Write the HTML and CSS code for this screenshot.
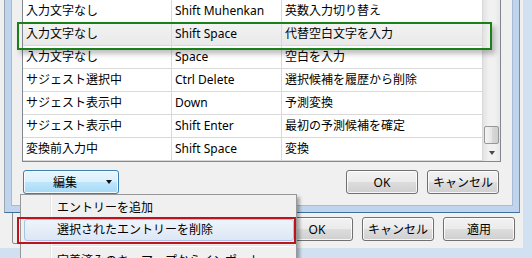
FILE: index.html
```html
<!DOCTYPE html>
<html lang="ja">
<head>
    <meta charset="UTF-8">
    <meta name="viewport" content="width=device-width, initial-scale=1.0">
    <title>キー設定の編集</title>
    <link rel="stylesheet" href="styles.css">
</head>
<body>
    <div class="outer">
        <div class="outer-bottom">
            <div class="outer-panel"></div>
            <div class="outer-buttons">
                <button class="btn">OK</button>
                <button class="btn">キャンセル</button>
                <button class="btn">適用</button>
            </div>
        </div>
    </div>

    <div class="editor">
        <div class="editor-client">
            <div class="keytable">
                <div class="rows">
                    <div class="row"><span>入力文字なし</span><span>Shift Muhenkan</span><span>英数入力切り替え</span></div>
                    <div class="row selected"><span>入力文字なし</span><span>Shift Space</span><span>代替空白文字を入力</span></div>
                    <div class="row"><span>入力文字なし</span><span>Space</span><span>空白を入力</span></div>
                    <div class="row"><span>サジェスト選択中</span><span>Ctrl Delete</span><span>選択候補を履歴から削除</span></div>
                    <div class="row"><span>サジェスト表示中</span><span>Down</span><span>予測変換</span></div>
                    <div class="row"><span>サジェスト表示中</span><span>Shift Enter</span><span>最初の予測候補を確定</span></div>
                    <div class="row"><span>変換前入力中</span><span>Shift Space</span><span>変換</span></div>
                </div>
                <div class="scrollbar">
                    <div class="track"><div class="thumb"></div></div>
                    <div class="scroll-btn"><span class="arrow"></span></div>
                </div>
            </div>
            <div class="actions">
                <button class="btn btn-hot">編集<span class="caret"></span></button>
                <button class="btn push-right">OK</button>
                <button class="btn">キャンセル</button>
            </div>
        </div>
    </div>

    <div class="menu">
        <div class="menu-item">エントリーを追加</div>
        <div class="menu-item active">選択されたエントリーを削除</div>
        <div class="menu-sep"></div>
        <div class="menu-item">定義済みのキーマップからインポート</div>
    </div>

    <div class="mark mark-green"></div>
    <div class="mark mark-red"></div>
</body>
</html>
```

FILE: styles.css
```css
body {
    margin: 0;
    width: 532px;
    height: 258px;
    overflow: hidden;
    position: relative;
    font-family: "Noto Sans", "Noto Sans CJK JP", sans-serif;
    font-size: 12px;
    color: #000;
    background: #f0f0f0;
}
.outer {
    width: 532px;
    height: 258px;
    box-sizing: border-box;
    background: #f0f0f0;
    border-right: 9px solid #d2e1f2;
    border-bottom: 10px solid #d2e1f2;
    display: flex;
    flex-direction: column;
    justify-content: flex-end;
}
.outer-bottom {
    display: flex;
    align-items: flex-end;
    padding: 0 8px 4px 12px;
}
.outer-panel {
    width: 240px;
    height: 60px;
    border: 1px solid #8a8c90;
    border-radius: 0 0 0 2px;
}
.outer-buttons {
    margin-left: auto;
    margin-bottom: 3px;
    display: flex;
    gap: 9px;
}
.btn {
    width: 72px;
    height: 24px;
    padding: 0;
    font: inherit;
    color: #000;
    border: 1px solid #707070;
    border-radius: 3px;
    background: linear-gradient(#f2f2f2 0%, #ebebeb 50%, #dddddd 51%, #cfcfcf 100%);
    box-shadow: inset 0 0 0 1px rgba(255, 255, 255, 0.8);
    display: flex;
    align-items: center;
    justify-content: center;
}

.editor {
    position: absolute;
    left: 4px;
    top: -40px;
    width: 516px;
    height: 253px;
    box-sizing: border-box;
    padding: 7px;
    background: #c0d5ed;
    border: 1px solid #3c6f9c;
    border-left-color: #9aa6b4;
    border-right-color: #36a5de;
}
.editor-client {
    height: 237px;
    box-sizing: border-box;
    padding: 31px 11px 11px 10px;
    background: #f0f0f0;
    box-shadow: 0 0 0 1px #a7bbd2;
}
.keytable {
    display: flex;
    height: 163px;
    box-sizing: border-box;
    border: 1px solid #828790;
    background: #fff;
}
.rows {
    width: 460px;
}
.row {
    display: grid;
    grid-template-columns: 149px 110px 201px;
    height: 23px;
    box-sizing: border-box;
    border-bottom: 1px solid #d9d9d9;
}
.row span {
    border-right: 1px solid #d9d9d9;
    padding-left: 3px;
    line-height: 22px;
    white-space: nowrap;
    overflow: hidden;
}
.row.selected {
    background: linear-gradient(#f3f3f3, #e9e9e9);
}
.scrollbar {
    width: 17px;
    display: flex;
    flex-direction: column;
    background: linear-gradient(to right, #e2e2e2, #f1f1f1 35%, #f1f1f1 70%, #e6e6e6);
}
.track {
    flex: 1;
    display: flex;
    flex-direction: column;
    justify-content: flex-end;
}
.thumb {
    height: 18px;
    margin: 0 1px;
    box-sizing: border-box;
    border: 1px solid #979797;
    border-radius: 2px;
    background: linear-gradient(to right, #f4f4f4, #e6e6e6 50%, #d9d9d9 51%, #cecece);
}
.scroll-btn {
    height: 17px;
    display: flex;
    align-items: center;
    justify-content: center;
}
.arrow {
    width: 0;
    height: 0;
    border-left: 3px solid transparent;
    border-right: 3px solid transparent;
    border-top: 4px solid #4a4a4a;
}
.actions {
    display: flex;
    gap: 9px;
    margin: 8px 2px 0 1px;
}
.btn-hot {
    width: 96px;
    justify-content: flex-start;
    padding-left: 29px;
    border-color: #3c7fb1;
    background: linear-gradient(#eaf6fd 0%, #d9f0fc 50%, #bee6fd 51%, #a7d9f5 100%);
}
.caret {
    margin-left: 29px;
    width: 0;
    height: 0;
    border-left: 3.5px solid transparent;
    border-right: 3.5px solid transparent;
    border-top: 4px solid #111;
}
.push-right {
    margin-left: auto;
}

.menu {
    position: absolute;
    left: 20px;
    top: 194px;
    width: 277px;
    height: 64px;
    overflow: hidden;
    box-sizing: border-box;
    padding: 2px 2px 0 3px;
    border: 1px solid #979797;
    border-bottom: 0;
    background: #f0f0f0 linear-gradient(to right, transparent 29px, #e2e3e3 29px, #e2e3e3 30px, #fff 30px, #fff 31px, transparent 31px);
    box-shadow: 3px 3px 3px rgba(0, 0, 0, 0.3);
}
.menu-item {
    height: 22px;
    line-height: 20px;
    box-sizing: border-box;
    padding-left: 32px;
    border: 1px solid transparent;
    border-radius: 3px;
    white-space: nowrap;
}
.menu-item.active {
    border-color: #a8c3e3;
    background: linear-gradient(#eef4fb, #dce7f5);
}
.menu-sep {
    margin: 4px 0 3px 28px;
    border-top: 1px solid #e0e0e0;
    border-bottom: 1px solid #fff;
}

.mark {
    position: absolute;
    box-sizing: border-box;
    border: 2px solid;
}
.mark-green {
    left: 17px;
    top: 22px;
    width: 475px;
    height: 28px;
    border-color: #1a801a;
    box-shadow: 3px 4px 5px rgba(0, 0, 0, 0.25);
}
.mark-red {
    left: 17px;
    top: 217px;
    width: 279px;
    height: 27px;
    border-color: #c0121c;
}
```
